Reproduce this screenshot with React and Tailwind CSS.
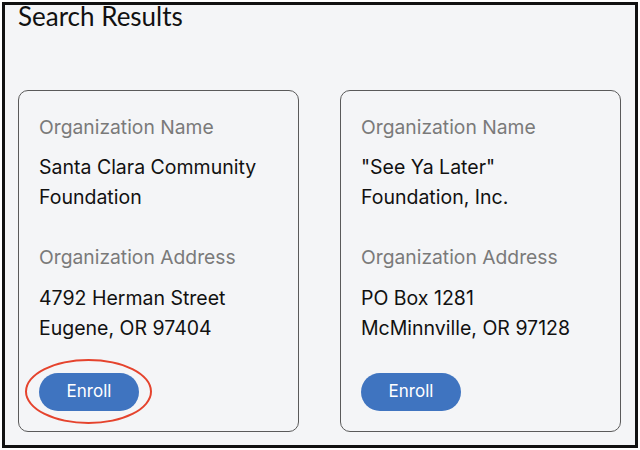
import React from 'react';

const results = [
  {
    name: ['Santa Clara Community', 'Foundation'],
    address: ['4792 Herman Street', 'Eugene, OR 97404'],
    highlight: true,
  },
  {
    name: ['"See Ya Later"', 'Foundation, Inc.'],
    address: ['PO Box 1281', 'McMinnville, OR 97128'],
    highlight: false,
  },
];

const ResultCard = ({ item }) => (
  <div className="h-[342px] rounded-[10px] border border-[#5a5a5a] bg-[#f4f5f7] px-5 pt-[24px] font-['Inter',sans-serif]">
    <div className="text-[19.3px] leading-[24px] text-[#7a7a7a]">Organization Name</div>
    <div className="mt-[13px] text-[19.5px] leading-[30px] text-[#111]">
      {item.name.map((line) => (
        <div key={line}>{line}</div>
      ))}
    </div>
    <div className="mt-[33px] text-[19.3px] leading-[24px] text-[#7a7a7a]">Organization Address</div>
    <div className="mt-[14px] text-[19.5px] leading-[30px] text-[#111]">
      {item.address.map((line) => (
        <div key={line}>{line}</div>
      ))}
    </div>
    <div className="relative mt-[30px] w-[100px]">
      <button className="h-[38px] w-[100px] rounded-full bg-[#3f74c0] text-[17px] text-white">
        Enroll
      </button>
      {item.highlight && (
        <div className="absolute left-[-14px] top-[-14px] h-[65px] w-[127px] rounded-[50%] border-2 border-[#e5432d]"></div>
      )}
    </div>
  </div>
);

export default function App() {
  return (
    <div className="h-[450px] w-[640px] bg-white p-[2px]">
      <div className="h-[446px] w-[636px] border-[3px] border-[#111] bg-[#f4f5f7] px-[13px]">
        <h1 className="font-['Lato',sans-serif] text-[26px] leading-[22px] text-[#111]">
          Search Results
        </h1>
        <div className="mt-[63px] grid grid-cols-[281px_281px] gap-[41px]">
          {results.map((item) => (
            <ResultCard key={item.name[0]} item={item} />
          ))}
        </div>
      </div>
    </div>
  );
}
